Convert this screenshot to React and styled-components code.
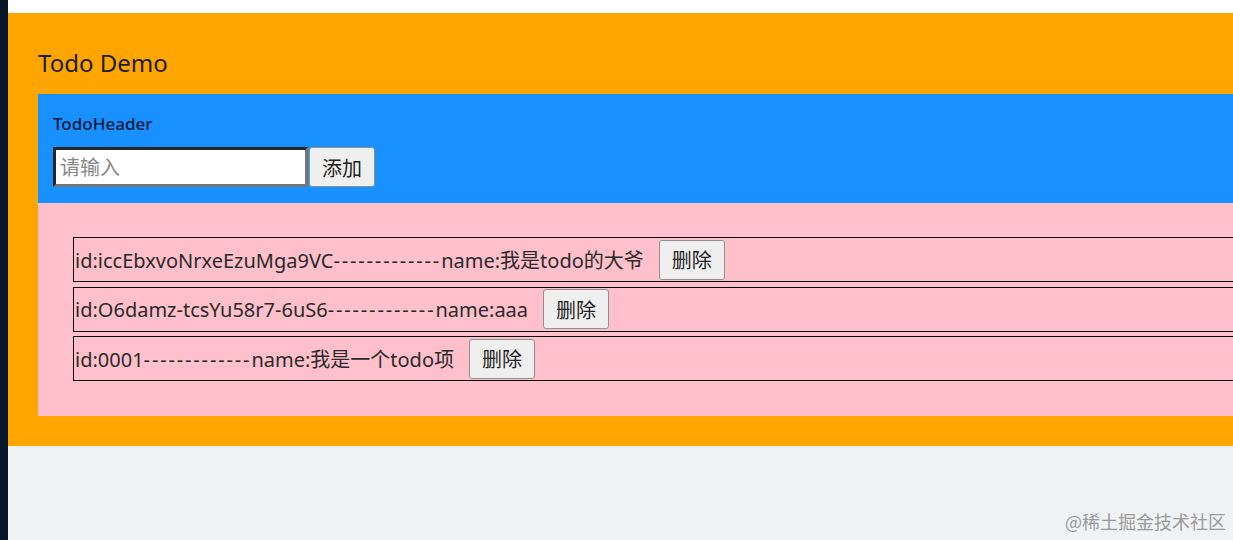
import React, { useState } from "react";
import styled, { createGlobalStyle } from "styled-components";

const GlobalStyle = createGlobalStyle`
  html, body {
    margin: 0;
    padding: 0;
    overflow: hidden;
    background: #f0f2f5;
  }
  body {
    font-family: "Segoe UI", "Noto Sans", "Noto Sans CJK SC", sans-serif;
    color: #222;
  }
`;

const initialTodos = [
  { id: "iccEbxvoNrxeEzuMga9VC", name: "我是todo的大爷" },
  { id: "O6damz-tcsYu58r7-6uS6", name: "aaa" },
  { id: "0001", name: "我是一个todo项" },
];

const App = () => {
  const [todos, setTodos] = useState(initialTodos);
  const [text, setText] = useState("");

  const add = () => {
    if (!text.trim()) return;
    setTodos((prev) => [{ id: String(Date.now()), name: text }, ...prev]);
    setText("");
  };

  const remove = (id) => setTodos((prev) => prev.filter((t) => t.id !== id));

  return (
    <>
      <GlobalStyle />
      <Page>
        <Strip />
        <Main>
          <TopBar />
          <Demo>
            <Title>Todo Demo</Title>
            <Header>
              <HeaderTitle>TodoHeader</HeaderTitle>
              <Form>
                <Input
                  placeholder="请输入"
                  value={text}
                  onChange={(e) => setText(e.target.value)}
                />
                <Btn onClick={add}>添加</Btn>
              </Form>
            </Header>
            <List>
              {todos.map((t) => (
                <Item key={t.id}>
                  <span>
                    id:{t.id}
                    <Dash>-------------</Dash>
                    name:{t.name}
                  </span>
                  <Btn small onClick={() => remove(t.id)}>
                    删除
                  </Btn>
                </Item>
              ))}
            </List>
          </Demo>
        </Main>
        <Mark>@稀土掘金技术社区</Mark>
      </Page>
    </>
  );
};

export default App;

const Page = styled.div`
  display: flex;
  height: 540px;
  width: 1233px;
  overflow: hidden;
  position: relative;
`;

const Strip = styled.div`
  width: 8px;
  flex: none;
  background: #061629;
`;

const Main = styled.div`
  flex: 1;
  display: flex;
  flex-direction: column;
`;

const TopBar = styled.div`
  height: 13px;
  background: #fff;
`;

const Demo = styled.div`
  background: #ffa500;
  padding: 30px 0 30px 30px;
  width: 1300px;
`;

const Title = styled.h2`
  margin: 4px 0 15px;
  font-size: 24px;
  line-height: 32px;
  font-weight: 400;
  color: #1c1c1c;
`;

const Header = styled.div`
  background: #1890ff;
  padding: 15px 15px 16px;
`;

const HeaderTitle = styled.div`
  font-size: 17px;
  line-height: 30px;
  font-weight: 500;
  color: #0b1a3a;
  margin-bottom: 8px;
`;

const Form = styled.div`
  display: flex;
  align-items: center;
`;

const Input = styled.input`
  box-sizing: border-box;
  width: 255px;
  height: 40px;
  border: 3px solid;
  border-color: #262626 #767676 #767676 #262626;
  padding: 0 4px;
  font-family: inherit;
  font-size: 20px;
  color: #222;
  outline: none;

  &::placeholder {
    color: #888;
  }
`;

const Btn = styled.button`
  box-sizing: border-box;
  height: 40px;
  width: 66px;
  margin-left: ${(props) => (props.small ? "15px" : "1px")};
  padding: 0;
  background: #efefef;
  border: 1px solid #8f8f8f;
  border-radius: 3px;
  font-family: inherit;
  font-size: 20px;
  color: #222;
  cursor: pointer;
`;

const List = styled.ul`
  list-style: none;
  margin: 0;
  background: #ffc0cb;
  padding: 34px 0 35px 35px;
  display: flex;
  flex-direction: column;
  gap: 4.5px;
`;

const Item = styled.li`
  box-sizing: border-box;
  height: 45px;
  border: 1px solid #000;
  padding-left: 1px;
  display: flex;
  align-items: center;
  font-size: 20px;
  color: #2a2a2a;
`;

const Dash = styled.span`
  letter-spacing: 1.85px;
`;

const Mark = styled.div`
  position: absolute;
  right: 7px;
  bottom: 6px;
  font-size: 18px;
  color: #9a9a9a;
  font-family: "Noto Sans CJK SC", sans-serif;
`;
